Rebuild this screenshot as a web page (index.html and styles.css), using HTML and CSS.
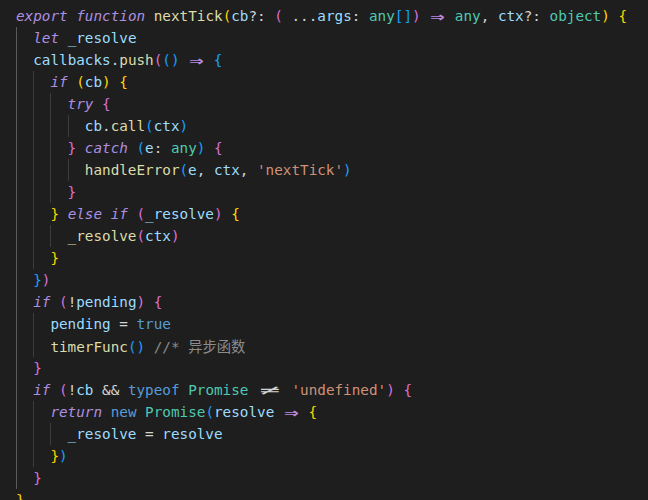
FILE: index.html
```html
<!DOCTYPE html>
<html lang="en">
<head>
<meta charset="utf-8">
<title>nextTick</title>
<link rel="stylesheet" href="styles.css">
</head>
<body>
<div class="editor">
<div class="line"><span class="k">export</span> <span class="k">function</span> <span class="f">nextTick</span><span class="b1">(</span><span class="v">cb</span>?: <span class="b2">(</span> ...<span class="v">args</span>: <span class="t">any</span><span class="b3">[]</span><span class="b2">)</span> <span class="ar">⇒</span> <span class="t">any</span>, <span class="v">ctx</span>?: <span class="t">object</span><span class="b1">)</span> <span class="b1">{</span></div>
<div class="line"><span class="ind act"></span><span class="k">let</span> <span class="v">_resolve</span></div>
<div class="line"><span class="ind act"></span><span class="v">callbacks</span>.<span class="f">push</span><span class="b2">(</span><span class="b3">()</span> <span class="ar">⇒</span> <span class="b3">{</span></div>
<div class="line"><span class="ind act"></span><span class="ind"></span><span class="k">if</span> <span class="b1">(</span><span class="v">cb</span><span class="b1">)</span> <span class="b1">{</span></div>
<div class="line"><span class="ind act"></span><span class="ind"></span><span class="ind"></span><span class="k">try</span> <span class="b2">{</span></div>
<div class="line"><span class="ind act"></span><span class="ind"></span><span class="ind"></span><span class="ind"></span><span class="v">cb</span>.<span class="f">call</span><span class="b3">(</span><span class="v">ctx</span><span class="b3">)</span></div>
<div class="line"><span class="ind act"></span><span class="ind"></span><span class="ind"></span><span class="b2">}</span> <span class="k">catch</span> <span class="b3">(</span><span class="v">e</span>: <span class="t">any</span><span class="b3">)</span> <span class="b2">{</span></div>
<div class="line"><span class="ind act"></span><span class="ind"></span><span class="ind"></span><span class="ind"></span><span class="f">handleError</span><span class="b3">(</span><span class="v">e</span>, <span class="v">ctx</span>, <span class="s">'nextTick'</span><span class="b3">)</span></div>
<div class="line"><span class="ind act"></span><span class="ind"></span><span class="ind"></span><span class="b2">}</span></div>
<div class="line"><span class="ind act"></span><span class="ind"></span><span class="b1">}</span> <span class="k">else</span> <span class="k">if</span> <span class="b2">(</span><span class="v">_resolve</span><span class="b2">)</span> <span class="b1">{</span></div>
<div class="line"><span class="ind act"></span><span class="ind"></span><span class="ind"></span><span class="f">_resolve</span><span class="b2">(</span><span class="v">ctx</span><span class="b2">)</span></div>
<div class="line"><span class="ind act"></span><span class="ind"></span><span class="b1">}</span></div>
<div class="line"><span class="ind act"></span><span class="b3">}</span><span class="b2">)</span></div>
<div class="line"><span class="ind act"></span><span class="k">if</span> <span class="b2">(</span>!<span class="v">pending</span><span class="b2">)</span> <span class="b2">{</span></div>
<div class="line"><span class="ind act"></span><span class="ind"></span><span class="v">pending</span> = <span class="bl">true</span></div>
<div class="line"><span class="ind act"></span><span class="ind"></span><span class="f">timerFunc</span><span class="b3">()</span> <span class="c">//* <span class="cjk">异步函数</span></span></div>
<div class="line"><span class="ind act"></span><span class="b2">}</span></div>
<div class="line"><span class="ind act"></span><span class="k">if</span> <span class="b2">(</span>!<span class="v">cb</span> &amp;&amp; <span class="bl">typeof</span> <span class="t">Promise</span> <span class="ne">≠</span> <span class="s">'undefined'</span><span class="b2">)</span> <span class="b2">{</span></div>
<div class="line"><span class="ind act"></span><span class="ind"></span><span class="k">return</span> <span class="bl">new</span> <span class="t">Promise</span><span class="b3">(</span><span class="v">resolve</span> <span class="ar">⇒</span> <span class="b1">{</span></div>
<div class="line"><span class="ind act"></span><span class="ind"></span><span class="ind"></span><span class="v">_resolve</span> = <span class="v">resolve</span></div>
<div class="line"><span class="ind act"></span><span class="ind"></span><span class="b1">}</span><span class="b3">)</span></div>
<div class="line"><span class="ind act"></span><span class="b2">}</span></div>
<div class="line"><span class="b1">}</span></div>
</div>
</body>
</html>
```

FILE: styles.css
```css
html, body {
  margin: 0;
  padding: 0;
  background: #1e1e1e;
}

body {
  width: 648px;
  height: 500px;
  overflow: hidden;
}

.editor {
  padding: 5px 0 0 16px;
  font-family: "DejaVu Sans Mono", "Liberation Mono", "Noto Sans CJK SC", monospace;
  font-size: 14.3px;
  line-height: 22px;
  color: #d4d4d4;
}

.line {
  display: block;
  white-space: pre;
  height: 22px;
}

.ind {
  display: inline-block;
  vertical-align: top;
  width: 2ch;
  height: 22px;
  box-shadow: inset 1px 0 0 #3c3c3c;
}

.ind.act {
  box-shadow: inset 1px 0 0 #5a5a5a;
}

.k { color: #ad8fe0; font-style: italic; }
.f { color: #dcdcaa; }
.v { color: #9cdcfe; }
.t { color: #4ec9b0; }
.bl { color: #569cd6; }
.s { color: #ce9178; }
.c { color: #8c8c8c; }
.cjk { font-family: "Noto Sans CJK SC", sans-serif; }
.b1 { color: #ffd700; }
.b2 { color: #da70d6; }
.b3 { color: #179fff; }

.ar {
  display: inline-block;
  width: 17px;
  height: 22px;
  line-height: 22px;
  vertical-align: top;
  text-align: center;
  color: #b98ae0;
  font-size: 17px;
  font-weight: bold;
  transform: scaleX(1.4);
}

.ne {
  display: inline-block;
  width: 3ch;
  text-align: center;
  color: #d4d4d4;
  transform: scaleX(2.4);
}
```
